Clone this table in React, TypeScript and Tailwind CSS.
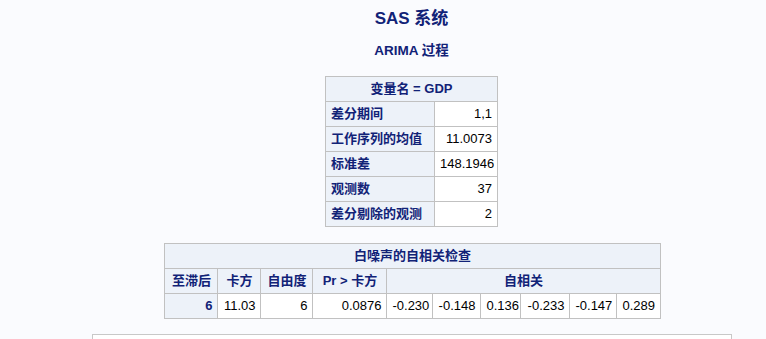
const font = { fontFamily: '"Liberation Sans", "Noto Sans CJK SC", sans-serif' }

const th = 'border border-[#c1c1c1] bg-[#edf2f9] text-[#112277] font-bold px-[5px] h-[25px] whitespace-nowrap'
const td = 'border border-[#c1c1c1] bg-white text-black px-[5px] h-[25px] text-right whitespace-nowrap'

const stats: [string, string][] = [
  ['差分期间', '1,1'],
  ['工作序列的均值', '11.0073'],
  ['标准差', '148.1946'],
  ['观测数', '37'],
  ['差分剔除的观测', '2'],
]

const acf = ['-0.230', '-0.148', '0.136', '-0.233', '-0.147', '0.289']
const acfWidths = [46, 48, 40, 49, 47, 43]

export default function App() {
  return (
    <div className="w-[766px] h-[339px] overflow-hidden bg-[#fafbfe]" style={font}>
      <div className="w-[823px] flex flex-col items-center text-[13px]">
        <div className="mt-[8px] h-[22px] text-[17px] font-bold text-[#112277] leading-[22px]">SAS 系统</div>
        <div className="mt-[12px] h-[18px] text-[13.5px] font-bold text-[#112277] leading-[18px]">ARIMA 过程</div>

        <table className="mt-[16px] border-collapse table-fixed w-[172px]">
          <colgroup>
            <col className="w-[109px]" />
            <col className="w-[63px]" />
          </colgroup>
          <thead>
            <tr>
              <th colSpan={2} className={th + ' text-center'}>变量名 = GDP</th>
            </tr>
          </thead>
          <tbody>
            {stats.map(([k, v]) => (
              <tr key={k}>
                <th className={th + ' text-left'}>{k}</th>
                <td className={td}>{v}</td>
              </tr>
            ))}
          </tbody>
        </table>

        <table className="mt-[16px] border-collapse table-fixed w-[496px] translate-x-[1px]">
          <colgroup>
            <col className="w-[53px]" />
            <col className="w-[43px]" />
            <col className="w-[52px]" />
            <col className="w-[74px]" />
            {acfWidths.map((w, i) => (
              <col key={i} style={{ width: w }} />
            ))}
          </colgroup>
          <thead>
            <tr>
              <th colSpan={10} className={th + ' text-center'}>白噪声的自相关检查</th>
            </tr>
            <tr>
              <th className={th + ' text-center'}>至滞后</th>
              <th className={th + ' text-center'}>卡方</th>
              <th className={th + ' text-center'}>自由度</th>
              <th className={th + ' text-center'}>Pr &gt; 卡方</th>
              <th colSpan={6} className={th + ' text-center'}>自相关</th>
            </tr>
          </thead>
          <tbody>
            <tr>
              <th className={th + ' text-right'}>6</th>
              <td className={td}>11.03</td>
              <td className={td}>6</td>
              <td className={td}>0.0876</td>
              {acf.map((v, i) => (
                <td key={i} className={td}>{v}</td>
              ))}
            </tr>
          </tbody>
        </table>

        <div className="mt-[15px] w-[640px] h-[40px] bg-white border border-[#c8c8c8]" />
      </div>
    </div>
  )
}
